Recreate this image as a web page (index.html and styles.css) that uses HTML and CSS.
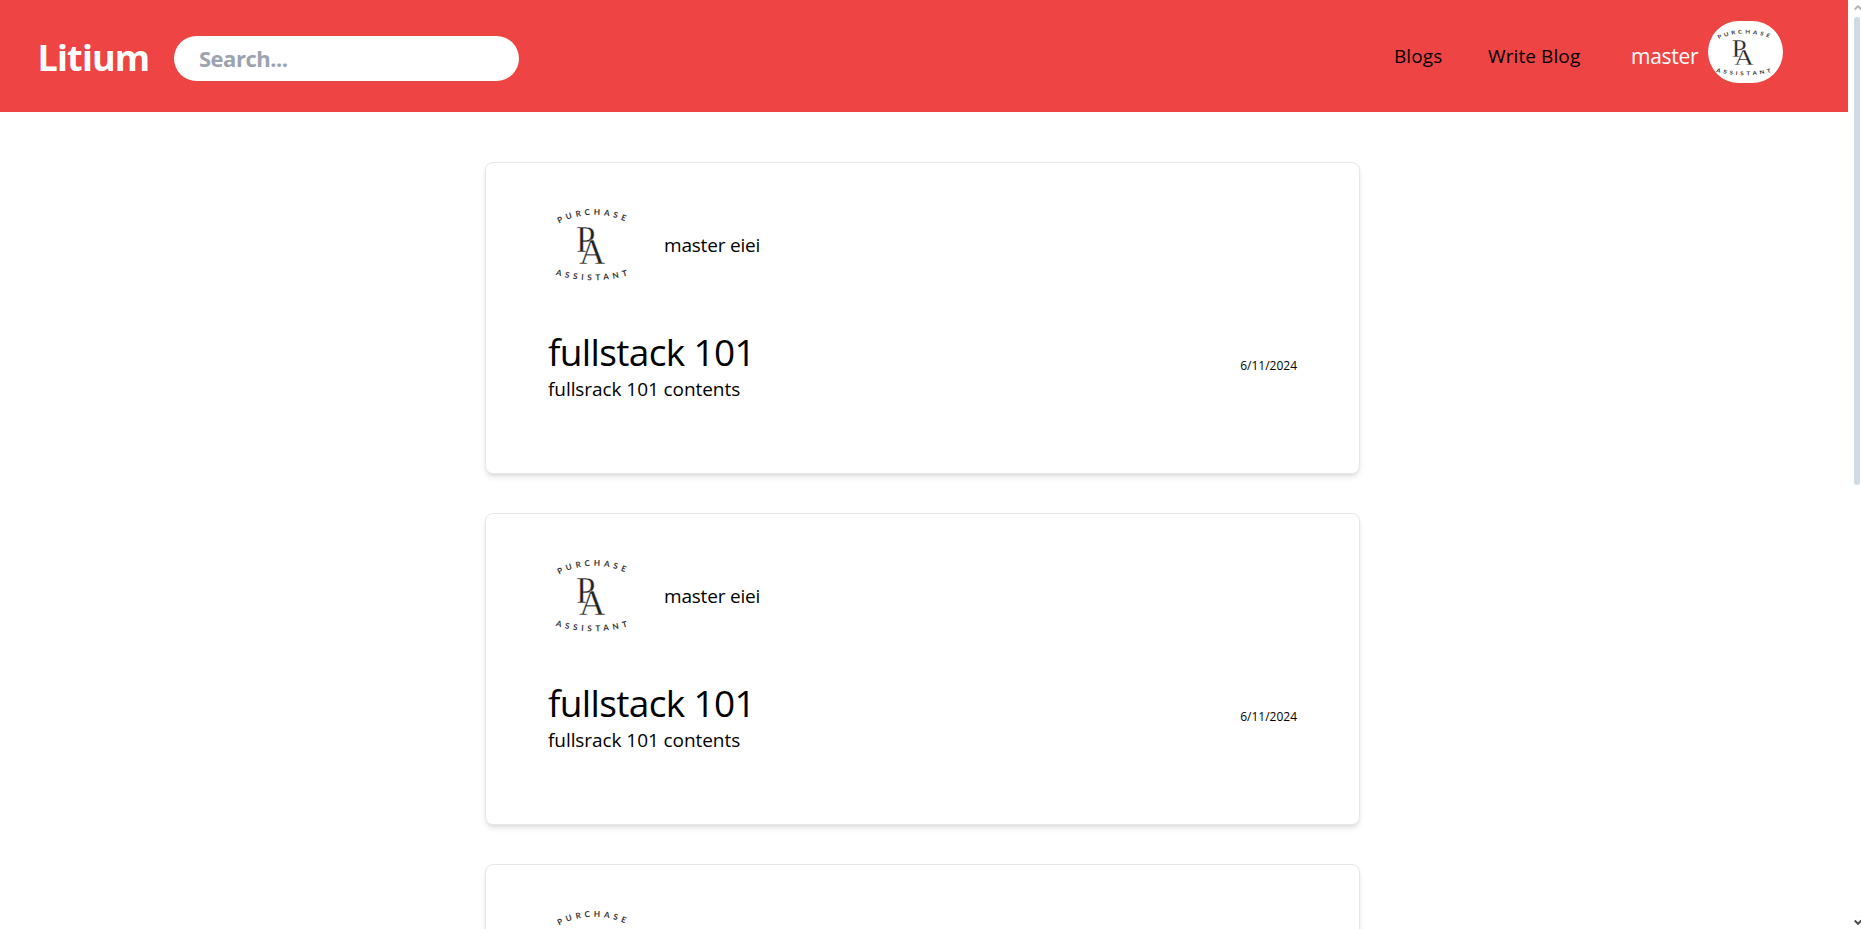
FILE: index.html
```html
<!DOCTYPE html>
<html lang="en">
<head>
<meta charset="utf-8">
<title>Litium</title>
<link rel="stylesheet" href="styles.css">
</head>
<body>
<svg class="defs" width="0" height="0" aria-hidden="true">
  <defs>
    <path id="arc-top" d="M18 27.4A76 76 0 0 1 90 28.4"/>
    <path id="arc-bottom" d="M14.5 78.7A127 127 0 0 0 92 77.7"/>
    <symbol id="logo" viewBox="0 0 101 97" preserveAspectRatio="none">
      <text class="logo-word" textLength="68" lengthAdjust="spacing"><textPath href="#arc-top" textLength="68">PURCHASE</textPath></text>
      <text class="logo-word" textLength="73" lengthAdjust="spacing"><textPath href="#arc-bottom" textLength="73">ASSISTANT</textPath></text>
      <text class="logo-letter" x="35" y="55.7" font-size="38" textLength="19.5" lengthAdjust="spacingAndGlyphs">P</text>
      <text class="logo-letter" x="38" y="67.6" font-size="36.5">A</text>
    </symbol>
  </defs>
</svg>
<div class="window">
  <div class="page">
    <header class="navbar">
      <a class="brand">Litium</a>
      <input class="search" type="text" placeholder="Search...">
      <nav class="menu">
        <a class="link blogs">Blogs</a>
        <a class="link write">Write Blog</a>
        <a class="user">master</a>
        <svg class="avatar" viewBox="0 0 75 62"><use href="#logo" x="-3" y="0.5" width="77" height="62"/></svg>
      </nav>
    </header>
    <main class="feed">
      <article class="card">
        <div class="author"><svg class="photo"><use href="#logo"/></svg><span class="name">master eiei</span></div>
        <div class="post"><div><h2 class="title">fullstack 101</h2><p class="text">fullsrack 101 contents</p></div><time class="date">6/11/2024</time></div>
      </article>
      <article class="card">
        <div class="author"><svg class="photo"><use href="#logo"/></svg><span class="name">master eiei</span></div>
        <div class="post"><div><h2 class="title">fullstack 101</h2><p class="text">fullsrack 101 contents</p></div><time class="date">6/11/2024</time></div>
      </article>
      <article class="card">
        <div class="author"><svg class="photo"><use href="#logo"/></svg></div>
      </article>
    </main>
  </div>
  <div class="scrollbar">
    <svg class="arrow up" viewBox="0 0 8 7"><path d="M0.7 5.5L4 2.2L7.3 5.5"/></svg>
    <div class="thumb"></div>
    <svg class="arrow down" viewBox="0 0 8 7"><path d="M0.7 1.5L4 4.8L7.3 1.5"/></svg>
  </div>
</div>
</body>
</html>
```
FILE: styles.css
```css
* { box-sizing: border-box; margin: 0; padding: 0; }
body { font-family: "Open Sans", "Noto Sans", sans-serif; color: #000; background: #fff; overflow: hidden; }
.defs { position: absolute; }
.window { display: flex; height: 929px; overflow: hidden; }
.page { width: 1848px; height: 929px; overflow: hidden; }

.navbar { display: flex; align-items: flex-start; height: 112px; padding-left: 37.5px; background: #ef4444; }
.brand { flex: none; width: 136.5px; padding-top: 35px; font-size: 36px; line-height: 46px; font-weight: 700; letter-spacing: -0.85px; color: #fff; }
.search { flex: none; width: 345px; height: 45px; margin-top: 36px; padding: 0 25px 2px; border: 0; border-radius: 22.5px; background: #fff; font-family: inherit; font-size: 22px; font-weight: 700; letter-spacing: -0.5px; }
.search::placeholder { color: #9ca3af; opacity: 1; }
.menu { display: flex; flex: 1; justify-content: flex-end; padding-right: 65px; white-space: nowrap; }
.link { margin-top: 42px; font-size: 19px; line-height: 28px; letter-spacing: 0.1px; }
.blogs { width: 94px; }
.write { width: 143px; }
.user { width: 77px; margin-top: 42px; font-size: 21px; line-height: 28px; letter-spacing: -0.3px; color: #fff; }
.avatar { flex: none; width: 75px; height: 62px; margin-top: 21px; border-radius: 31px; background: #fff; }

.feed { display: flex; flex-direction: column; align-items: flex-start; gap: 39px; padding: 50px 0 0 485px; }
.card { flex: none; width: 875px; height: 312px; padding: 33px 62px 0 55px; border: 1px solid #e5e7eb; border-radius: 8px; background: #fff; box-shadow: 0 4px 6px -1px rgba(0,0,0,.1), 0 2px 4px -2px rgba(0,0,0,.1); }
.author { display: flex; align-items: center; }
.photo { width: 101px; height: 97px; }
.name { margin-left: 22px; padding-top: 1px; font-size: 19px; line-height: 28px; letter-spacing: -0.2px; }
.post { display: flex; align-items: center; justify-content: space-between; margin-top: 37px; padding-left: 7px; }
.title { font-size: 37px; line-height: 43px; font-weight: 400; letter-spacing: -0.65px; }
.text { padding-top: 2px; font-size: 19px; line-height: 29px; letter-spacing: -0.07px; }
.date { margin-bottom: 2px; font-size: 12px; line-height: 16px; }

.logo-word { font-family: Lato, "Open Sans", sans-serif; font-size: 8.1px; font-weight: 700; fill: #333; }
.logo-letter { font-family: "Liberation Serif", serif; fill: #222; stroke: #fff; stroke-width: 0.4px; }

.scrollbar { display: flex; flex-direction: column; width: 13px; height: 929px; padding: 4px 0 3px 6px; background: #fff; }
.arrow { width: 8px; height: 7px; fill: none; stroke-width: 2; }
.up { stroke: #b5b5b5; }
.down { margin-top: auto; stroke: #505050; }
.thumb { width: 6px; height: 468px; margin-top: 6px; border-radius: 3px; background: #cfdbe4; }
```
